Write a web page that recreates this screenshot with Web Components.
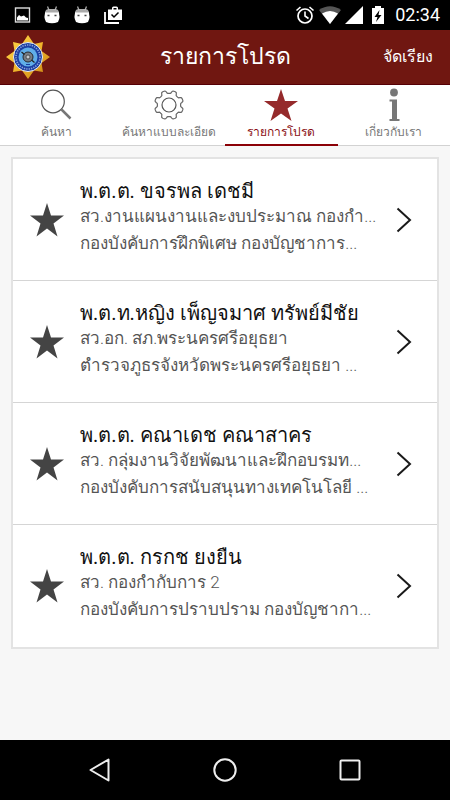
<!DOCTYPE html>
<html lang="th">
<head>
<meta charset="utf-8">
<meta name="viewport" content="width=device-width, initial-scale=1">
<title>รายการโปรด</title>
<style>
html, body { height: 100%; margin: 0; }
body { font-family: Roboto, "Noto Sans", sans-serif; background: #f7f7f7; }
</style>
</head>
<body>
<favorites-app></favorites-app>

<template id="t-app">
<style>
:host { display: flex; flex-direction: column; min-height: 100%; background: #f7f7f7; }
main { flex: 1; padding: 11px; }
ul { list-style: none; margin: 0; padding: 0; background: #fff; border: 2px solid #e3e3e3; }
</style>
<status-bar></status-bar>
<title-bar>รายการโปรด</title-bar>
<tab-bar>
  <tab-item icon="search">ค้นหา</tab-item>
  <tab-item icon="gear">ค้นหาแบบละเอียด</tab-item>
  <tab-item icon="star" active>รายการโปรด</tab-item>
  <tab-item icon="info">เกี่ยวกับเรา</tab-item>
</tab-bar>
<main>
  <ul>
    <li><officer-row><span slot="name">พ.ต.ต. ขจรพล เดชมี</span><span slot="post">สว.งานแผนงานและงบประมาณ กองกำ...</span><span slot="unit">กองบังคับการฝึกพิเศษ กองบัญชาการ...</span></officer-row></li>
    <li><officer-row><span slot="name">พ.ต.ท.หญิง เพ็ญจมาศ ทรัพย์มีชัย</span><span slot="post">สว.อก. สภ.พระนครศรีอยุธยา</span><span slot="unit">ตำรวจภูธรจังหวัดพระนครศรีอยุธยา ...</span></officer-row></li>
    <li><officer-row><span slot="name">พ.ต.ต. คณาเดช คณาสาคร</span><span slot="post">สว. กลุ่มงานวิจัยพัฒนาและฝึกอบรมท...</span><span slot="unit">กองบังคับการสนับสนุนทางเทคโนโลยี ...</span></officer-row></li>
    <li><officer-row last><span slot="name">พ.ต.ต. กรกช ยงยืน</span><span slot="post">สว. กองกำกับการ 2</span><span slot="unit">กองบังคับการปราบปราม กองบัญชากา...</span></officer-row></li>
  </ul>
</main>
<nav-bar></nav-bar>
</template>

<template id="t-status">
<style>
:host { display: flex; align-items: center; justify-content: space-between; height: 30px; padding: 0 10px 0 14px; background: #000; color: #fff; }
div { display: flex; align-items: center; }
svg { display: block; }
.left { gap: 12px; }
.right { gap: 4px; }
time { font-size: 18px; line-height: 20px; font-weight: 400; margin-left: 4px; }
</style>
<div class="left">
  <svg width="17" height="18" viewBox="0 0 17 18"><rect x="1.5" y="2" width="14" height="14" fill="none" stroke="#ddd" stroke-width="1.4"/><path d="M3 14.500v-3l2-2.500 2 1.500 3-1 2 2 2 .5v2.500z" fill="#fff"/></svg>
  <svg width="18" height="20" viewBox="0 0 18 20"><path d="M4.500 1.500 6 5M13.500 1.500 12 5" stroke="#aaa" stroke-width="1.300"/><path d="M3 5Q9 3 15 5Q18 12 15 17Q9 19.500 3 17Q0 12 3 5z" fill="#fff"/><path d="M3 5Q9 3 15 5V7.500H3z" fill="#aaa"/><path d="M4.500 10.500h2M11.500 10.500h2" stroke="#444" stroke-width="1.600"/></svg>
  <svg width="18" height="20" viewBox="0 0 18 20"><path d="M4.500 1.500 6 5M13.500 1.500 12 5" stroke="#aaa" stroke-width="1.300"/><path d="M3 5Q9 3 15 5Q18 12 15 17Q9 19.500 3 17Q0 12 3 5z" fill="#fff"/><path d="M3 5Q9 3 15 5V7.500H3z" fill="#aaa"/><path d="M4.500 10.500h2M11.500 10.500h2" stroke="#444" stroke-width="1.600"/></svg>
  <svg width="20" height="20" viewBox="0 0 20 20"><path d="M2 7v11h14" fill="none" stroke="#fff" stroke-width="1.800"/><path d="M5 4.500h4V3q0-1.500 1.500-1.500h3Q15 1.500 15 3v1.500h4V15H5z" fill="#fff"/><path d="M10.500 3h3v1.500h-3z" fill="#000"/><path d="m8.500 9.500 2.500 2.500 4.500-4.500" fill="none" stroke="#000" stroke-width="1.500"/></svg>
</div>
<div class="right">
  <svg width="20" height="20" viewBox="0 0 20 20"><circle cx="10" cy="11" r="7" fill="none" stroke="#fff" stroke-width="1.700"/><path d="M10 6.500V11l3.500 2.500M1.500 5.500 5.500 2M18.500 5.500l-4-3.500" fill="none" stroke="#fff" stroke-width="1.600"/></svg>
  <svg width="22" height="20" viewBox="0 0 22 20"><path d="M0 5Q11-2.500 22 5L11 19z" fill="#555"/><path d="M3 8.500q8-5 16 0L11 19z" fill="#fff"/></svg>
  <svg width="18" height="20" viewBox="0 0 18 20"><path d="M0 19 18 1v18z" fill="#fff"/></svg>
  <svg width="20" height="20" viewBox="0 0 20 20"><path d="M5 3h3V1h6v2h3v16H5z" fill="#fff"/><path d="M12.500 5 7.500 12h3L9 17l5.500-7h-3z" fill="#000"/></svg>
  <time>02:34</time>
</div>
</template>

<template id="t-title">
<style>
:host { display: grid; grid-template-columns: 1fr auto 1fr; align-items: center; height: 55px; box-sizing: border-box; padding: 0 17px 0 17px; background: #701711; border-bottom: 1px solid #560006; color: #fff; }
svg { display: block; margin-left: -12px; }
h1 { margin: 0; font-size: 23px; line-height: 32px; font-weight: 400; }
button { justify-self: end; background: none; border: 0; padding: 0; margin: 0; color: inherit; font: 16px/24px Roboto, "Noto Sans", sans-serif; }
</style>
<svg width="46" height="46" viewBox="0 0 46 46" role="img" aria-label="ตราสัญลักษณ์">
  <defs><linearGradient id="g" x2="1" y2="1"><stop stop-color="#ffd84e"/><stop offset=".5" stop-color="#f0b62b"/><stop offset="1" stop-color="#c68112"/></linearGradient></defs>
  <path d="M23 1 29 10 38 8 36.500 17 45 23 36.500 29 38 38 29 36.500 23 45 17 36.500 8 38 9.500 29 1 23 9.500 17 8 8 17 10z" fill="url(#g)"/>
  <circle cx="23" cy="23" r="14.500" fill="#1b3fa2" stroke="#e9edf5" stroke-width="1"/>
  <circle cx="23" cy="23" r="12" fill="none" stroke="#8ca3dc" stroke-width="1.600" stroke-dasharray="1.300 1.100"/>
  <circle cx="23" cy="23" r="9.500" fill="#60aee8"/>
  <circle cx="23" cy="23" r="5" fill="#777e85" stroke="#252a30" stroke-width="1"/><circle cx="23" cy="23" r="2" fill="#c5cbd0" stroke="#333" stroke-width=".7"/>
  <path d="m16.500 18 3 2.500M26.500 26l3 2.500" stroke="#222" stroke-width="1.200"/><path d="M21 30.500h4" stroke="#1b3fa2"/>
</svg>
<h1><slot></slot></h1>
<button type="button">จัดเรียง</button>
</template>

<template id="t-tabs">
<style>
:host { display: block; background: #fff; }
nav { display: grid; grid-template-columns: repeat(4, 1fr); box-shadow: inset 0 -1px #d2d2d2; }
</style>
<nav><slot></slot></nav>
</template>

<template id="t-tab">
<style>
:host { display: block; color: #777; }
:host([active]) { color: #8b1014; }
button { display: flex; flex-direction: column; align-items: center; width: 100%; height: 61px; padding: 3px 0 0; margin: 0; box-sizing: border-box; border: 0; border-bottom: 2px solid transparent; background: none; color: inherit; font: 12px/20px Roboto, "Noto Sans", sans-serif; white-space: nowrap; }
:host([active]) button { border-color: #8b0006; }
svg { display: block; flex: none; }
</style>
<button type="button"><svg width="36" height="34" viewBox="0 0 36 34" aria-hidden="true"></svg><slot></slot></button>
</template>

<template id="t-row">
<style>
:host { display: block; }
a { display: grid; grid-template-columns: 67px 1fr 67px; align-items: center; height: 122px; box-sizing: border-box; border-bottom: 1px solid #d5d5d5; color: #555; text-decoration: none; }
:host([last]) a { border-bottom-color: transparent; }
svg { display: block; justify-self: center; }
.text { display: flex; flex-direction: column; min-width: 0; padding-bottom: 4px; white-space: nowrap; font-size: 17px; line-height: 27px; font-weight: 300; }
.name { font-size: 20px; line-height: 24px; font-weight: 400; color: #111; }
</style>
<a href="#">
  <svg width="34" height="34" viewBox="0 0 34 34" aria-hidden="true"><path d="M17 0 21 12.500H34L23.500 20.500 27.500 33.500 17 25.500 6.500 33.500 10.500 20.500 0 12.500H13z" fill="#444"/></svg>
  <div class="text"><div class="name"><slot name="name"></slot></div><slot name="post"></slot><slot name="unit"></slot></div>
  <svg width="16" height="26" viewBox="0 0 16 26" aria-hidden="true"><path d="M1.500 1.500 14 13 1.500 24.500" fill="none" stroke="#1a1a1a" stroke-width="2"/></svg>
</a>
</template>

<template id="t-nav">
<style>
:host { display: block; background: #000; }
nav { display: grid; grid-template-columns: repeat(3, 125px); justify-content: center; height: 60px; }
button { display: grid; place-items: center; background: none; border: 0; padding: 0; }
</style>
<nav>
  <button type="button" aria-label="ย้อนกลับ"><svg width="26" height="26" viewBox="0 0 26 26"><path d="M3.500 13 21.500 2.500v21z" fill="none" stroke="#eee" stroke-width="2" stroke-linejoin="round"/></svg></button>
  <button type="button" aria-label="หน้าหลัก"><svg width="26" height="26" viewBox="0 0 26 26"><circle cx="13" cy="13" r="10.700" fill="none" stroke="#eee" stroke-width="2"/></svg></button>
  <button type="button" aria-label="แอปล่าสุด"><svg width="26" height="26" viewBox="0 0 26 26"><rect x="3.500" y="3.500" width="19" height="19" rx="1" fill="none" stroke="#eee" stroke-width="2"/></svg></button>
</nav>
</template>

<script>
function gearPath() {
  let d = '';
  for (let i = 0; i <= 128; i++) {
    const a = i / 128 * Math.PI * 2;
    const c = Math.cos(a * 8);
    const r = 13.1 + 1.5 * Math.tanh(c * 2.5);
    d += (i ? 'L' : 'M') + (18 + r * Math.sin(a + Math.PI / 8)).toFixed(2) + ' ' + (17 - r * Math.cos(a + Math.PI / 8)).toFixed(2);
  }
  return d + 'z';
}
const ICONS = {
  search: '<circle cx="15" cy="13.500" r="11.300" fill="none" stroke="#555" stroke-width="1.200"/><path d="m23.500 21.500 9 9" stroke="#777" stroke-width="2.500"/>',
  gear: `<path d="${gearPath()}" fill="none" stroke="#666" stroke-width="1.200"/><circle cx="18" cy="17" r="7" fill="none" stroke="#555" stroke-width="1.200"/>`,
  star: '<path d="M18 1 22 13H35L24.500 20.500 28.500 33 18 25.500 7.500 33 11.500 20.500 1 13H14z" fill="#952a2b"/>',
  info: '<circle cx="18" cy="4.500" r="3.900" fill="#777"/><path d="M13.500 11.500H21V31h2.500v2h-10v-2H16V13.500h-2.500z" fill="#777"/>'
};
function define(tag, id, setup) {
  customElements.define(tag, class extends HTMLElement {
    constructor() {
      super();
      const root = this.attachShadow({ mode: 'open' });
      root.append(document.getElementById(id).content.cloneNode(true));
    }
    connectedCallback() { if (setup) setup(this); }
  });
}
define('status-bar', 't-status');
define('title-bar', 't-title');
define('tab-bar', 't-tabs');
define('tab-item', 't-tab', el => {
  el.shadowRoot.querySelector('svg').innerHTML = ICONS[el.getAttribute('icon')];
  if (el.hasAttribute('active')) el.shadowRoot.querySelector('button').setAttribute('aria-current', 'page');
});
define('officer-row', 't-row');
define('nav-bar', 't-nav');
define('favorites-app', 't-app');
</script>
</body>
</html>
